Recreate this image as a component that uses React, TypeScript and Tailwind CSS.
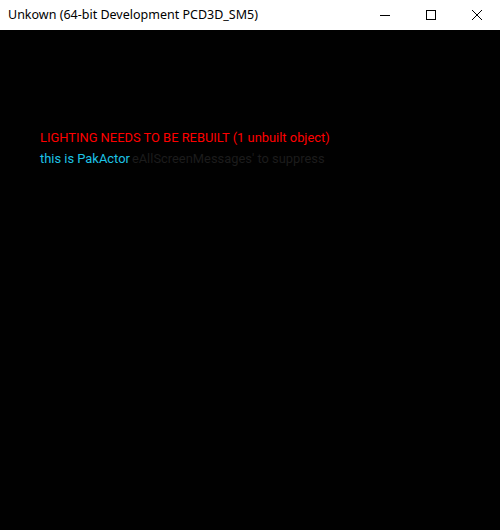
export default function App() {
  return (
    <div className="flex h-[530px] w-[500px] flex-col bg-black">
      <div className="flex h-[30px] shrink-0 items-center bg-white">
        <div className="flex-1 pl-2 font-['Noto_Sans',sans-serif] text-[12.5px] text-black">
          Unkown (64-bit Development PCD3D_SM5)
        </div>
        <div className="flex h-full">
          <div className="flex w-[46px] items-center justify-center">
            <svg width="10" height="10" viewBox="0 0 10 10">
              <path d="M0 5.5h10" stroke="#000" strokeWidth="1" />
            </svg>
          </div>
          <div className="flex w-[46px] items-center justify-center">
            <svg width="10" height="10" viewBox="0 0 10 10">
              <rect x="0.5" y="0.5" width="9" height="9" fill="none" stroke="#000" strokeWidth="1" />
            </svg>
          </div>
          <div className="flex w-[46px] items-center justify-center">
            <svg width="10" height="10" viewBox="0 0 10 10">
              <path d="M0 0L10 10M10 0L0 10" stroke="#000" strokeWidth="1" />
            </svg>
          </div>
        </div>
      </div>
      <div className="flex-1 bg-[#010101] pl-10 pt-[97px] font-['Roboto',sans-serif] text-[12.9px] leading-[21px]">
        <div className="text-[#ff0000]">LIGHTING NEEDS TO BE REBUILT (1 unbuilt object)</div>
        <div className="flex">
          <span className="text-[#1ec3e6]">this is PakActor</span>
          <span className="ml-[2px] text-[#1c1c1c]">eAllScreenMessages' to suppress</span>
        </div>
      </div>
    </div>
  );
}
